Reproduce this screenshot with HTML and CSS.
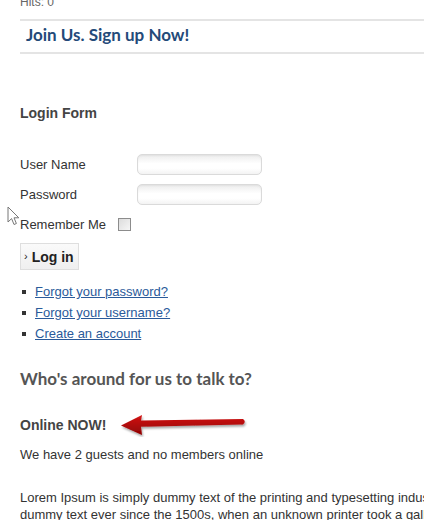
FILE: index.html
```html
<!DOCTYPE html>
<html lang="en">
<head>
    <meta charset="UTF-8">
    <title>Login Form</title>
    <link rel="stylesheet" href="styles.css">
</head>
<body>
    <div class="page">
        <p class="hits">Hits: 0</p>
        <div class="signup">
            <h2>Join Us. Sign up Now!</h2>
        </div>

        <div class="login">
            <h3>Login Form</h3>
            <form class="login-form">
                <div class="field">
                    <label for="username">User Name</label>
                    <input type="text" id="username" class="inputbox">
                </div>
                <div class="field">
                    <label for="passwd">Password</label>
                    <input type="password" id="passwd" class="inputbox">
                </div>
                <div class="remember">
                    <label for="remember">Remember Me</label>
                    <input type="checkbox" id="remember" class="checkbox">
                </div>
                <button type="button" class="login-btn"><span class="chev">&rsaquo;</span>Log in</button>
            </form>
            <ul class="links">
                <li><a href="#">Forgot your password?</a></li>
                <li><a href="#">Forgot your username?</a></li>
                <li><a href="#">Create an account</a></li>
            </ul>
        </div>

        <div class="whosonline">
            <h2>Who's around for us to talk to?</h2>
            <div class="online-title">
                <h3>Online NOW!</h3>
                <svg class="arrow" width="130" height="24" viewBox="0 0 130 24">
                    <defs>
                        <linearGradient id="red" x1="0" y1="0" x2="0" y2="1">
                            <stop offset="0" stop-color="#d41515"/>
                            <stop offset="1" stop-color="#8e0303"/>
                        </linearGradient>
                        <filter id="shadow" x="-10%" y="-30%" width="120%" height="180%">
                            <feDropShadow dx="1" dy="2" stdDeviation="1.2" flood-color="#000" flood-opacity="0.35"/>
                        </filter>
                    </defs>
                    <path d="M2 12.5 L23 2 L22 7.5 L124 6 Q127.5 8.7 124 11.5 L22 13.8 L23 22 Z" fill="url(#red)" filter="url(#shadow)"/>
                </svg>
            </div>
            <p>We have 2 guests and no members online</p>
            <p class="lorem">Lorem Ipsum is simply dummy text of the printing and typesetting industry. Lorem Ipsum has been the industry's standard<br>dummy text ever since the 1500s, when an unknown printer took a galley of type and scrambled it to make a type specimen book.</p>
        </div>

        <!-- mouse pointer caught in the screenshot -->
        <svg class="cursor" width="13" height="20" viewBox="0 0 13 20">
            <path d="M1 1 L1 16 L4.6 12.6 L7 18.5 L9.4 17.5 L7 11.8 L11.8 11.8 Z" fill="#fff" stroke="#777" stroke-width="1" stroke-linejoin="round"/>
        </svg>
    </div>
</body>
</html>
```

FILE: styles.css
```css
body {
    font-family: 'Liberation Sans', Arial, sans-serif;
    font-size: 13px;
    margin: 0;
    padding: 0;
    background: #fff;
    color: #333;
    overflow: hidden;
}
.page {
    position: relative;
    padding-left: 20px;
    margin-top: -5px;
}
.hits {
    margin: 0;
    font-size: 12px;
    line-height: 14px;
    color: #666;
    padding-bottom: 10px;
}
.signup {
    border-top: 2px solid #e4e4e4;
    border-bottom: 2px solid #e4e4e4;
    padding: 2px 0 5px 6px;
}
.signup h2 {
    margin: 0;
    font-family: Lato, 'Open Sans', sans-serif;
    font-weight: 700;
    font-size: 17px;
    line-height: 24px;
    color: #244a79;
}
.login h3 {
    margin: 51px 0 0 0;
    font-size: 14px;
    line-height: 16px;
    color: #444;
}
.login-form {
    margin-top: 33px;
}
.field,
.remember {
    display: flex;
    align-items: center;
    height: 21px;
    margin-bottom: 9px;
}
.field label {
    width: 117px;
}
.inputbox {
    width: 125px;
    height: 21px;
    box-sizing: border-box;
    margin: 0;
    border: 1px solid #dadada;
    border-radius: 5px;
    background: linear-gradient(#ececec, #fff 45%, #fff 70%, #f3f3f3);
    box-shadow: inset 0 1px 2px rgba(0,0,0,0.05);
}
.checkbox {
    appearance: none;
    -webkit-appearance: none;
    width: 13px;
    height: 13px;
    margin: 0 0 0 12px;
    border: 1px solid #8c8c8c;
    background: linear-gradient(135deg, #dcdcdc, #f6f6f6);
}
.login-btn {
    display: flex;
    align-items: center;
    width: 59px;
    height: 27px;
    margin-top: -1px;
    padding: 0 0 0 3px;
    border: 1px solid #dedede;
    background: linear-gradient(#fafafa, #efefef);
    font-family: 'Liberation Sans', Arial, sans-serif;
    font-size: 14px;
    font-weight: bold;
    color: #222;
}
.chev {
    font-size: 11px;
    font-weight: normal;
    margin-right: 4px;
    position: relative;
    top: -1px;
}
.links {
    list-style: none;
    margin: 11px 0 0 0;
    padding: 0;
}
.links li {
    line-height: 21px;
    padding-left: 15px;
    position: relative;
}
.links li::before {
    content: "";
    position: absolute;
    left: 2px;
    top: 9px;
    width: 4px;
    height: 4px;
    background: #333;
}
.links a {
    color: #2a5a9a;
    text-decoration: underline;
}
.whosonline h2 {
    margin: 23px 0 0 0;
    font-family: Lato, 'Open Sans', sans-serif;
    font-weight: 700;
    font-size: 17px;
    line-height: 24px;
    color: #555;
}
.online-title {
    display: flex;
    align-items: center;
    margin-top: 22px;
}
.online-title h3 {
    margin: 0;
    font-size: 14px;
    line-height: 16px;
    color: #444;
}
.arrow {
    margin-left: 13px;
}
.whosonline p {
    margin: 9px 0 0 0;
    line-height: 18px;
}
.whosonline .lorem {
    margin-top: 25px;
    line-height: 17px;
    white-space: nowrap;
}
.cursor {
    position: absolute;
    left: 7px;
    top: 211px;
}
```
